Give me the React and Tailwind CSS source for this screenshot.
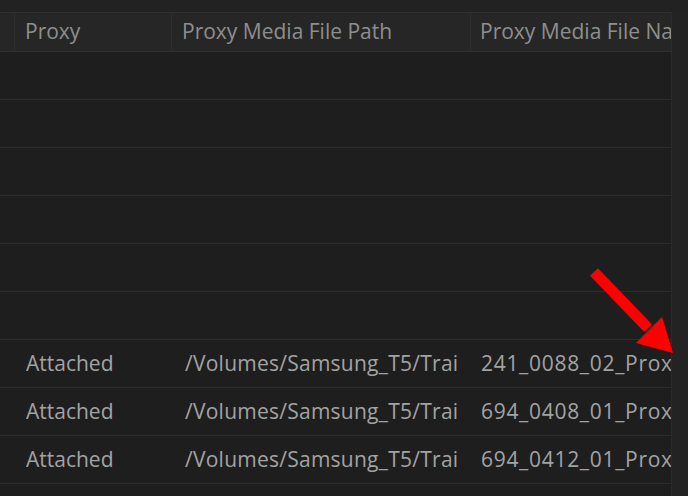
const cols = [
  { w: 'w-[15px]', pl: 'pl-0', pr: 'pr-0' },
  { w: 'w-[157px]', pl: 'pl-[10px]', pr: 'pr-[8px]' },
  { w: 'w-[299px]', pl: 'pl-[10px]', pr: 'pr-[14px]' },
  { w: 'flex-1', pl: 'pl-[9px]', pr: 'pr-0' },
];

const rows = [
  null, null, null, null, null, null,
  ['Attached', '/Volumes/Samsung_T5/Trailers', '241_0088_02_Proxy.mov'],
  ['Attached', '/Volumes/Samsung_T5/Trailers', '694_0408_01_Proxy.mov'],
  ['Attached', '/Volumes/Samsung_T5/Trailers', '694_0412_01_Proxy.mov'],
];

function Cell({ i, children, header }) {
  const c = cols[i];
  return (
    <div
      className={`${c.w} ${i === 3 ? 'min-w-0' : 'shrink-0'} ${c.pl} ${c.pr} h-full flex items-center ${
        header && i < 3 ? 'border-r border-[#2f2f2f]' : ''
      }`}
    >
      <div className="flex-1 min-w-0 overflow-hidden whitespace-nowrap">{children}</div>
    </div>
  );
}

export default function App() {
  return (
    <div
      className="relative w-[688px] h-[496px] overflow-hidden bg-[#222222]"
      style={{ fontFamily: '"Open Sans", "Noto Sans", sans-serif' }}
    >
      <div className="h-3" />
      <div className="flex h-[484px]">
        <div className="w-[672px] flex flex-col border-r border-[#2b2b2b] bg-[#1e1e1e]">
          {/* header */}
          <div className="h-[40px] flex bg-[#262626] border-t border-b border-[#303030] text-[21px] text-[#8e8e8e]">
            <Cell i={0} header />
            <Cell i={1} header>Proxy</Cell>
            <Cell i={2} header>Proxy Media File Path</Cell>
            <Cell i={3} header>Proxy Media File Name</Cell>
          </div>
          {/* rows */}
          {rows.map((r, idx) => (
            <div key={idx} className="h-[48px] flex border-b border-[#2c2c2c] text-[21px] text-[#a3a3a3]">
              <Cell i={0} />
              <Cell i={1}>{r && <span className="pl-px">{r[0]}</span>}</Cell>
              <Cell i={2}>{r && <span className="pl-[3px] tracking-[0.25px]">{r[1]}</span>}</Cell>
              <Cell i={3}>{r && <span className="pl-px tracking-[0.7px]">{r[2]}</span>}</Cell>
            </div>
          ))}
        </div>
        <div className="flex-1 bg-[#232323]" />
      </div>

      {/* red annotation arrow */}
      <svg className="absolute left-0 top-0 pointer-events-none" width="688" height="496">
        <line x1="594" y1="272" x2="648" y2="328" stroke="#ff0000" strokeWidth="11" />
        <polygon points="636,343 662,317 673,353" fill="#ff0000" />
      </svg>
    </div>
  );
}
